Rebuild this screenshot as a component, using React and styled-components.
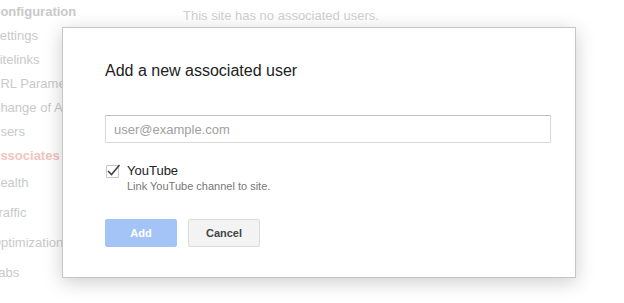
import React from 'react'
import styled, { createGlobalStyle } from 'styled-components'

const GlobalStyle = createGlobalStyle`
  html, body {
    margin: 0;
    padding: 0;
    background: #fff;
    font-family: "Liberation Sans", Arial, sans-serif;
    overflow: hidden;
  }
`

const Page = styled.div`
  position: relative;
  width: 624px;
  height: 303px;
  display: flex;
  overflow: hidden;
`

const Sidebar = styled.ul`
  list-style: none;
  margin: 0 0 0 -9px;
  padding: 0;
  width: 180px;
  flex-shrink: 0;
`

const NavItem = styled.li`
  height: ${p => (p.$top ? 30 : 24)}px;
  line-height: ${p => (p.$top ? 30 : 24)}px;
  font-size: 13px;
  white-space: nowrap;
  color: ${p => (p.$active ? '#f2c4bd' : '#c9c9c9')};
  font-weight: ${p => (p.$bold || p.$active ? 'bold' : 'normal')};
`

const Main = styled.div`
  padding: 8px 0 0 12px;
  font-size: 13px;
  line-height: 16px;
  color: #cfcfcf;
`

const Dialog = styled.div`
  position: absolute;
  left: 62px;
  top: 27px;
  width: 512px;
  height: 249px;
  box-sizing: content-box;
  background: #fff;
  border: 1px solid #c6c6c6;
  box-shadow: 0 4px 18px rgba(0, 0, 0, 0.2);
  display: flex;
  flex-direction: column;
`

const Body = styled.div`
  padding: 33px 25px 0 42px;
  display: flex;
  flex-direction: column;
`

const Title = styled.h2`
  margin: 0;
  font-size: 16px;
  line-height: 20px;
  font-weight: normal;
  color: #222;
`

const Input = styled.input`
  margin-top: 34px;
  box-sizing: border-box;
  width: 446px;
  height: 28px;
  border: 1px solid #d9d9d9;
  border-top-color: #c0c0c0;
  padding: 0 8px;
  font-family: inherit;
  font-size: 13px;
  color: #222;
  outline: none;
  &::placeholder {
    color: #a0a0a0;
  }
`

const CheckRow = styled.label`
  margin-top: 20px;
  display: flex;
  gap: 8px;
  align-items: flex-start;
`

const Box = styled.span`
  margin-top: 2px;
  margin-left: 1px;
  width: 13px;
  height: 13px;
  box-sizing: border-box;
  border: 1px solid #c6c6c6;
  border-radius: 1px;
  background: #fff;
  position: relative;
  flex-shrink: 0;
`

const LabelText = styled.div`
  display: flex;
  flex-direction: column;
`

const LabelMain = styled.span`
  font-size: 13px;
  line-height: 16px;
  color: #222;
`

const LabelSub = styled.span`
  font-size: 11px;
  line-height: 14px;
  color: #777;
`

const Buttons = styled.div`
  margin-top: 26px;
  display: flex;
  gap: 11px;
`

const Button = styled.button`
  width: 72px;
  height: 28px;
  box-sizing: border-box;
  border-radius: 2px;
  font-family: inherit;
  font-size: 11px;
  font-weight: bold;
  padding: 0;
  background: ${p => (p.$primary ? '#a4c4f8' : '#f3f3f3')};
  color: ${p => (p.$primary ? '#fff' : '#444')};
  border: 1px solid ${p => (p.$primary ? '#a4c4f8' : '#dcdcdc')};
`

const nav = [
  { label: 'Configuration', bold: true },
  { label: 'Settings' },
  { label: 'Sitelinks' },
  { label: 'URL Parameters' },
  { label: 'Change of Address' },
  { label: 'Users' },
  { label: 'Associates', active: true },
  { label: 'Health', top: true },
  { label: 'Traffic', top: true },
  { label: 'Optimization', top: true },
  { label: 'Labs', top: true },
]

export default function App() {
  return (
    <>
      <GlobalStyle />
      <Page>
        <Sidebar>
          {nav.map(n => (
            <NavItem key={n.label} $bold={n.bold} $active={n.active} $top={n.top}>
              {n.label}
            </NavItem>
          ))}
        </Sidebar>
        <Main>This site has no associated users.</Main>

        <Dialog>
          <Body>
            <Title>Add a new associated user</Title>
            <Input placeholder="user@example.com" />
            <CheckRow>
              <Box>
                <svg width="15" height="14" viewBox="0 0 15 14" style={{ position: 'absolute', left: -1, top: -3 }}>
                  <path d="M2 8 L5.5 11.5 L13.5 2" fill="none" stroke="#444" strokeWidth="1.6" />
                </svg>
              </Box>
              <LabelText>
                <LabelMain>YouTube</LabelMain>
                <LabelSub>Link YouTube channel to site.</LabelSub>
              </LabelText>
            </CheckRow>
            <Buttons>
              <Button $primary>Add</Button>
              <Button>Cancel</Button>
            </Buttons>
          </Body>
        </Dialog>
      </Page>
    </>
  )
}
